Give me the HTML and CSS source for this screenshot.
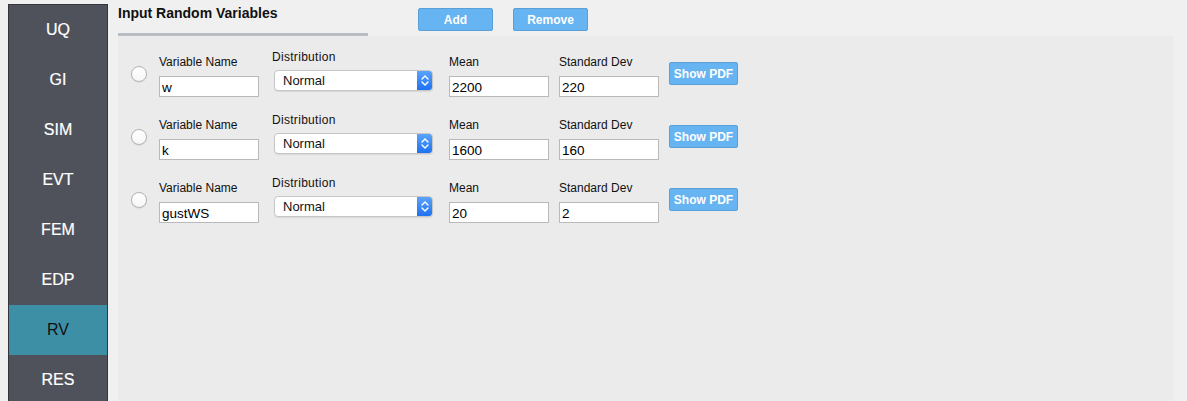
FILE: index.html
```html
<!DOCTYPE html>
<html>
<head>
<meta charset="utf-8">
<title>Input Random Variables</title>
<link rel="stylesheet" href="styles.css">
</head>
<body>
<div class="app">
  <nav class="sidebar">
    <div class="nav-item">UQ</div>
    <div class="nav-item">GI</div>
    <div class="nav-item">SIM</div>
    <div class="nav-item">EVT</div>
    <div class="nav-item">FEM</div>
    <div class="nav-item">EDP</div>
    <div class="nav-item active">RV</div>
    <div class="nav-item">RES</div>
  </nav>
  <main class="main">
    <header class="header">
      <div class="title-block"><span class="title">Input Random Variables</span></div>
      <button class="btn btn-add">Add</button>
      <button class="btn btn-remove">Remove</button>
    </header>
    <section class="panel">
      <div class="rv-row">
        <span class="radio"></span>
        <div class="field">
          <label class="lbl">Variable Name</label>
          <input class="txt" type="text" value="w">
        </div>
        <div class="field dist">
          <label class="lbl">Distribution</label>
          <div class="select"><span class="select-text">Normal</span><span class="select-arrow"><svg width="16" height="21" viewBox="0 0 16 21"><path d="M5 9 L8 6 L11 9 M5 12 L8 15 L11 12" fill="none" stroke="#fff" stroke-width="1.4" stroke-linecap="round" stroke-linejoin="round"/></svg></span></div>
        </div>
        <div class="field mean">
          <label class="lbl">Mean</label>
          <input class="txt" type="text" value="2200">
        </div>
        <div class="field sd">
          <label class="lbl">Standard Dev</label>
          <input class="txt" type="text" value="220">
        </div>
        <button class="btn btn-pdf">Show PDF</button>
      </div>
      <div class="rv-row">
        <span class="radio"></span>
        <div class="field">
          <label class="lbl">Variable Name</label>
          <input class="txt" type="text" value="k">
        </div>
        <div class="field dist">
          <label class="lbl">Distribution</label>
          <div class="select"><span class="select-text">Normal</span><span class="select-arrow"><svg width="16" height="21" viewBox="0 0 16 21"><path d="M5 9 L8 6 L11 9 M5 12 L8 15 L11 12" fill="none" stroke="#fff" stroke-width="1.4" stroke-linecap="round" stroke-linejoin="round"/></svg></span></div>
        </div>
        <div class="field mean">
          <label class="lbl">Mean</label>
          <input class="txt" type="text" value="1600">
        </div>
        <div class="field sd">
          <label class="lbl">Standard Dev</label>
          <input class="txt" type="text" value="160">
        </div>
        <button class="btn btn-pdf">Show PDF</button>
      </div>
      <div class="rv-row">
        <span class="radio"></span>
        <div class="field">
          <label class="lbl">Variable Name</label>
          <input class="txt" type="text" value="gustWS">
        </div>
        <div class="field dist">
          <label class="lbl">Distribution</label>
          <div class="select"><span class="select-text">Normal</span><span class="select-arrow"><svg width="16" height="21" viewBox="0 0 16 21"><path d="M5 9 L8 6 L11 9 M5 12 L8 15 L11 12" fill="none" stroke="#fff" stroke-width="1.4" stroke-linecap="round" stroke-linejoin="round"/></svg></span></div>
        </div>
        <div class="field mean">
          <label class="lbl">Mean</label>
          <input class="txt" type="text" value="20">
        </div>
        <div class="field sd">
          <label class="lbl">Standard Dev</label>
          <input class="txt" type="text" value="2">
        </div>
        <button class="btn btn-pdf">Show PDF</button>
      </div>
    </section>
  </main>
</div>
</body>
</html>
```

FILE: styles.css
```css
* { box-sizing: border-box; }
html, body { margin: 0; padding: 0; }
body {
  background: #f0f0f0;
  font-family: "Liberation Sans", Arial, sans-serif;
  color: #111;
  width: 1187px;
  height: 401px;
  overflow: hidden;
}
.app {
  display: flex;
  gap: 10px;
  padding-left: 8px;
  height: 401px;
}
.sidebar {
  width: 100px;
  margin-top: 4px;
  background: #4f525a;
  border: 1px solid #34363b;
  border-bottom: none;
  display: flex;
  flex-direction: column;
  flex-shrink: 0;
}
.nav-item {
  height: 50px;
  flex-shrink: 0;
  display: flex;
  align-items: center;
  justify-content: center;
  color: #fff;
  font-size: 16px;
  -webkit-text-stroke: 0.2px #fff;
}
.nav-item.active {
  background: #3d8fa6;
  color: #111;
  -webkit-text-stroke: 0;
}
.main {
  flex: 1;
  margin-right: 14px;
  display: flex;
  flex-direction: column;
}
.header {
  height: 36px;
  display: flex;
  align-items: flex-start;
  flex-shrink: 0;
}
.title-block {
  width: 250px;
  height: 36px;
  border-bottom: 3px solid #b8bdc3;
  padding-top: 4px;
}
.title {
  font-size: 14px;
  font-weight: bold;
  color: #111;
  line-height: 17px;
}
.btn {
  font-family: "Liberation Sans", Arial, sans-serif;
  background: #66b4f2;
  border: 1px solid #5a9fd6;
  border-radius: 2px;
  color: #fff;
  font-weight: bold;
  font-size: 12px;
  padding: 0;
  cursor: pointer;
}
.btn-add {
  width: 75px;
  height: 23px;
  margin-top: 8px;
  margin-left: 50px;
}
.btn-remove {
  width: 75px;
  height: 23px;
  margin-top: 8px;
  margin-left: 20px;
}
.panel {
  flex: 1;
  background: #ebebeb;
  padding: 14px 0 0 13px;
}
.rv-row {
  height: 63px;
  display: flex;
  align-items: flex-start;
}
.radio {
  width: 16px;
  height: 16px;
  margin-top: 16px;
  border-radius: 50%;
  border: 1px solid #b3b3b3;
  background: linear-gradient(#ffffff, #f6f6f6);
  box-shadow: 0 0.5px 1px rgba(0,0,0,0.12);
  flex-shrink: 0;
}
.field {
  display: flex;
  flex-direction: column;
  width: 100px;
  margin-top: 5px;
  margin-left: 12px;
}
.lbl {
  font-size: 12px;
  line-height: 14px;
  color: #111;
  margin-bottom: 7px;
  white-space: nowrap;
}
.txt {
  width: 100px;
  height: 21px;
  border: 1px solid #b9b9b9;
  background: #fff;
  font-family: "Liberation Sans", Arial, sans-serif;
  font-size: 13.5px;
  color: #000;
  padding: 2px 2px 0 2px;
  margin: 0;
  outline: none;
}
.field.dist {
  width: 161px;
  margin-top: 0;
  margin-left: 13px;
}
.field.dist .lbl { margin-bottom: 6px; letter-spacing: 0.3px; }
.select {
  margin-left: 2px;
  width: 159px;
  height: 21px;
  display: flex;
  background: #fff;
  border: 1px solid #c6c6c6;
  border-radius: 4px;
  box-shadow: 0 1px 1px rgba(0,0,0,0.08);
  overflow: hidden;
}
.select-text {
  flex: 1;
  font-size: 13px;
  line-height: 19px;
  padding-left: 8px;
  color: #111;
}
.select-arrow {
  width: 16px;
  height: 21px;
  margin-top: -1px;
  margin-right: -1px;
  background: linear-gradient(#5ea6fa, #1b6ff0);
  display: flex;
  align-items: center;
  justify-content: center;
}
.select-arrow svg { display: block; }
.field.mean { margin-left: 16px; }
.field.sd { margin-left: 10px; }
.btn-pdf {
  width: 69px;
  height: 23px;
  margin-top: 12px;
  margin-left: 10px;
  flex-shrink: 0;
}
```
